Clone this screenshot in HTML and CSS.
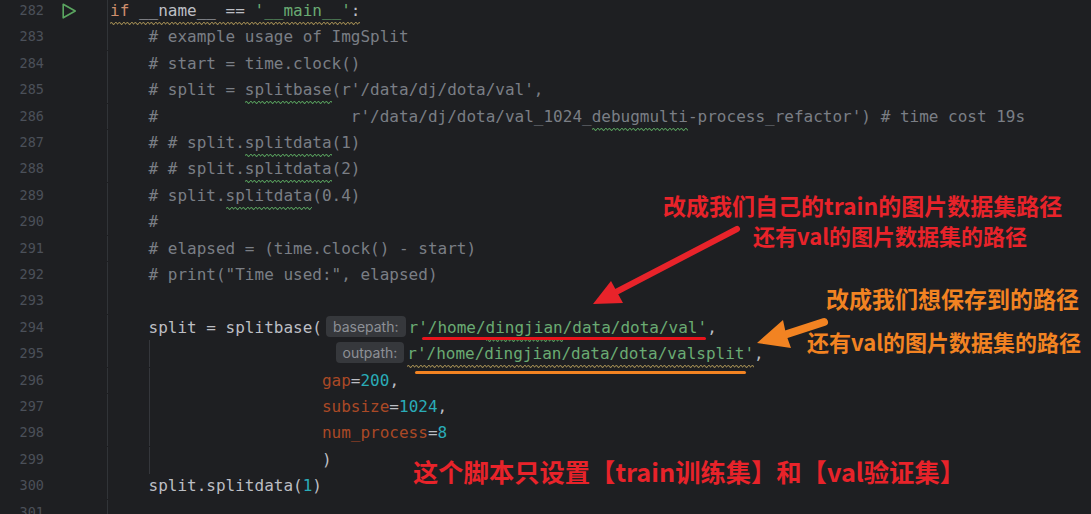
FILE: index.html
```html
<!DOCTYPE html>
<html lang="zh">
<head>
    <meta charset="UTF-8">
    <title>ImgSplit</title>
    <link rel="stylesheet" href="styles.css">
</head>
<body>
    <div class="editor">
        <div class="row"><span class="ln">282</span><span class="mark"><svg class="run" width="16" height="16" viewBox="0 0 16 16"><polygon points="2.2,1.2 14.2,8 2.2,14.8" fill="none" stroke="#5aa660" stroke-width="1.6" stroke-linejoin="round"/></svg></span><span class="code"><span class="wave weak"><span class="kw">if</span> __name__ == <span class="str">'__main__'</span>:</span></span></div>
        <div class="row"><span class="ln">283</span><span class="mark"></span><span class="code">    <span class="cm"># example usage of ImgSplit</span></span></div>
        <div class="row"><span class="ln">284</span><span class="mark"></span><span class="code">    <span class="cm"># start = time.clock()</span></span></div>
        <div class="row"><span class="ln">285</span><span class="mark"></span><span class="code">    <span class="cm"># split = <span class="wave typo">splitbase</span>(r'/data/dj/dota/val',</span></span></div>
        <div class="row"><span class="ln">286</span><span class="mark"></span><span class="code">    <span class="cm">#                    r'/data/dj/dota/val_1024_<span class="wave typo">debugmulti</span>-process_refactor') # time cost 19s</span></span></div>
        <div class="row"><span class="ln">287</span><span class="mark"></span><span class="code">    <span class="cm"># # split.<span class="wave typo">splitdata</span>(1)</span></span></div>
        <div class="row"><span class="ln">288</span><span class="mark"></span><span class="code">    <span class="cm"># # split.<span class="wave typo">splitdata</span>(2)</span></span></div>
        <div class="row"><span class="ln">289</span><span class="mark"></span><span class="code">    <span class="cm"># split.<span class="wave typo">splitdata</span>(0.4)</span></span></div>
        <div class="row"><span class="ln">290</span><span class="mark"></span><span class="code">    <span class="cm">#</span></span></div>
        <div class="row"><span class="ln">291</span><span class="mark"></span><span class="code">    <span class="cm"># elapsed = (time.clock() - start)</span></span></div>
        <div class="row"><span class="ln">292</span><span class="mark"></span><span class="code">    <span class="cm"># print("Time used:", elapsed)</span></span></div>
        <div class="row"><span class="ln">293</span><span class="mark"></span><span class="code"></span></div>
        <div class="row"><span class="ln">294</span><span class="mark"></span><span class="code">    split = splitbase(<span class="hint">basepath:</span><span class="str">r'/home/<span class="wave typo">dingjian</span>/data/dota/val'</span>,</span></div>
        <div class="row"><span class="ln">295</span><span class="mark"></span><span class="code"><span class="guide">    </span>                   <span class="hint">outpath:</span><span class="str wave weak">r'/home/dingjian/data/dota/valsplit'</span>,</span></div>
        <div class="row"><span class="ln">296</span><span class="mark"></span><span class="code"><span class="guide">    </span>                  <span class="arg">gap</span>=<span class="num">200</span>,</span></div>
        <div class="row"><span class="ln">297</span><span class="mark"></span><span class="code"><span class="guide">    </span>                  <span class="arg">subsize</span>=<span class="num">1024</span>,</span></div>
        <div class="row"><span class="ln">298</span><span class="mark"></span><span class="code"><span class="guide">    </span>                  <span class="arg">num_process</span>=<span class="num">8</span></span></div>
        <div class="row"><span class="ln">299</span><span class="mark"></span><span class="code"><span class="guide">    </span>                  )</span></div>
        <div class="row"><span class="ln">300</span><span class="mark"></span><span class="code">    split.splitdata(<span class="num">1</span>)</span></div>
        <div class="row"><span class="ln">301</span><span class="mark"></span><span class="code"></span></div>
    </div>

    <!-- annotations drawn over the screenshot -->
    <svg class="arrows" width="1091" height="514" viewBox="0 0 1091 514">
        <line x1="737" y1="229" x2="616" y2="292" stroke="#e8232a" stroke-width="6" stroke-linecap="round"/>
        <polygon points="593,304 611,281 617,292 623,303" fill="#e8232a"/>
        <line x1="824" y1="322" x2="784" y2="335" stroke="#f28322" stroke-width="8" stroke-linecap="round"/>
        <polygon points="757,343 783,320 786,334 791,348" fill="#f28322"/>
    </svg>
    <div class="mark-line red-line"></div>
    <div class="mark-line orange-line"></div>
    <div class="note red note-train">改成我们自己的train的图片数据集路径</div>
    <div class="note red note-val">还有val的图片数据集的路径</div>
    <div class="note orange note-out">改成我们想保存到的路径</div>
    <div class="note orange note-out-val">还有val的图片数据集的路径</div>
    <div class="note red note-bottom">这个脚本只设置【train训练集】和【val验证集】</div>
</body>
</html>
```

FILE: styles.css
```css
body {
    margin: 0;
    width: 1091px;
    height: 514px;
    overflow: hidden;
    position: relative;
    background-color: #1e1f22;
}
.editor {
    margin-top: -3px;
}
/* rows alternate 26/27px so every line sits on whole pixels (26.4 on average) */
.row {
    display: flex;
    box-sizing: border-box;
    height: 26px;
    padding-top: 1px;
    line-height: 25px;
}
.row:nth-child(5n+2),
.row:nth-child(5n+4) {
    height: 27px;
    padding-top: 0;
    line-height: 27px;
}
.ln {
    width: 44px;
    text-align: right;
    font-family: "DejaVu Sans Mono", monospace;
    font-size: 13.5px;
    color: #4b5059;
}
.mark {
    width: 63px;
    display: flex;
    align-items: center;
}
.run {
    margin-left: 17px;
}
.code {
    flex: 1;
    border-left: 1px solid #313438;
    padding-left: 2px;
    white-space: pre;
    font-family: "DejaVu Sans Mono", monospace;
    font-size: 16px;
    color: #bcbec4;
}
.kw { color: #cf8e6d; }
.str { color: #6aab73; }
.cm { color: #7a7e85; }
.num { color: #2aacb8; }
.arg { color: #aa4926; }

/* squiggly underline drawn with gradients (text-decoration hid the underscores) */
.wave {
    padding-bottom: 5px;
    background-image:
        linear-gradient(45deg, transparent 65%, var(--wave) 80%, transparent 90%),
        linear-gradient(135deg, transparent 5%, var(--wave) 15%, transparent 25%),
        linear-gradient(135deg, transparent 45%, var(--wave) 55%, transparent 65%),
        linear-gradient(45deg, transparent 25%, var(--wave) 35%, transparent 50%);
    background-repeat: repeat-x;
    background-size: 8px 3px;
    background-position: left bottom;
}
.weak { --wave: #9a8650; }
.typo { --wave: #55995a; }

.guide {
    display: inline-block;
    height: 27px;
    vertical-align: top;
    box-shadow: 1px 0 0 #35373c;
}
.hint {
    display: inline-block;
    height: 21px;
    line-height: 21px;
    padding: 0 7px;
    margin: 0 3px 0 4px;
    border-radius: 4px;
    background-color: #36383c;
    color: #8d9096;
    font-family: Inter, "Noto Sans", sans-serif;
    font-size: 14px;
    vertical-align: 1px;
}

/* annotations */
.arrows {
    position: absolute;
    left: 0;
    top: 0;
    pointer-events: none;
}
.mark-line {
    position: absolute;
    height: 3px;
    border-radius: 2px;
}
.red-line {
    left: 422px;
    top: 337px;
    width: 284px;
    background-color: #e8141c;
}
.orange-line {
    left: 415px;
    top: 371px;
    width: 331px;
    background-color: #f28322;
}
.note {
    position: absolute;
    font-family: "Noto Sans CJK SC", sans-serif;
    font-weight: 700;
    font-size: 23px;
    line-height: 23px;
    white-space: nowrap;
}
.red { color: #e8232a; }
.orange { color: #f28322; }
.note-train {
    left: 663px;
    top: 194px;
}
.note-val {
    left: 753px;
    top: 224px;
    font-size: 22px;
    line-height: 22px;
}
.note-out {
    left: 826px;
    top: 287px;
}
.note-out-val {
    left: 807px;
    top: 330px;
    font-size: 22px;
    line-height: 22px;
}
.note-bottom {
    left: 413px;
    top: 459px;
    font-size: 25.3px;
    line-height: 25px;
}
```
